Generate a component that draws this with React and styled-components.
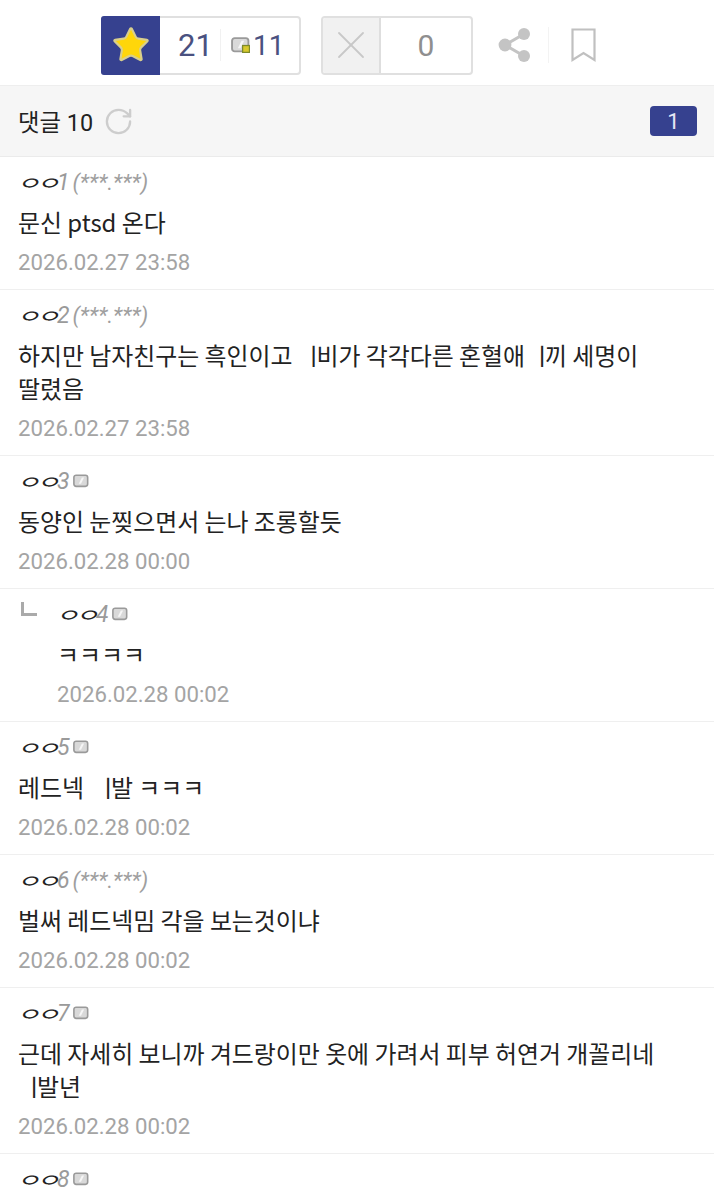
import React from 'react'
import styled, { createGlobalStyle } from 'styled-components'
import { Star, X, RotateCw } from 'lucide-react'

function Badge({ locked }) {
  return (
    <BadgeIcon viewBox="0 0 18 15" $locked={locked}>
      <rect x="1" y="1" width="15.5" height="12.5" rx="2.5" fill="#d9d9d9" stroke="#9a9a9a" strokeWidth="1.8" />
      <path d="M10 3.5 L12.5 3.5 L9 10.5 L6.5 10.5 Z" fill="#f6f6f6" />
      {locked && <rect x="11" y="8" width="6.5" height="6.5" fill="#d8c92c" stroke="#7d8a2a" strokeWidth="1.2" />}
    </BadgeIcon>
  )
}

function Comment({ item }) {
  return (
    <Row $reply={item.reply}>
      {item.reply && <ReplyMark />}
      <Writer>
        <Nick>ㅇㅇ</Nick>
        <Num>{item.id}</Num>
        {item.ip ? <Ip>(***.***)</Ip> : <Badge />}
      </Writer>
      {item.body.map((line, i) => (
        <Body key={i}>{line}</Body>
      ))}
      {item.date && <DateText>{item.date}</DateText>}
    </Row>
  )
}

export default function App() {
  const comments = [
    { id: 1, ip: true, body: ['문신 ptsd 온다'], date: '2026.02.27 23:58' },
    {
      id: 2,
      ip: true,
      body: [
        <>하지만 남자친구는 흑인이고<Gap $w={10} /><Sliver>ㅣ</Sliver>비가 각각다른 혼혈애<Gap $w={6} /><Sliver>ㅣ</Sliver>끼 세명이</>,
        '딸렸음',
      ],
      date: '2026.02.27 23:58',
    },
    { id: 3, body: ['동양인 눈찢으면서 는나 조롱할듯'], date: '2026.02.28 00:00' },
    { id: 4, reply: true, body: ['ㅋㅋㅋㅋ'], date: '2026.02.28 00:02' },
    { id: 5, body: [<>레드넥<Gap $w={13} /><Sliver>ㅣ</Sliver>발 ㅋㅋㅋ</>], date: '2026.02.28 00:02' },
    { id: 6, ip: true, body: ['벌써 레드넥밈 각을 보는것이냐'], date: '2026.02.28 00:02' },
    {
      id: 7,
      body: [
        '근데 자세히 보니까 겨드랑이만 옷에 가려서 피부 허연거 개꼴리네',
        <><Gap $w={5} /><Sliver>ㅣ</Sliver>발년</>,
      ],
      date: '2026.02.28 00:02',
    },
    { id: 8, body: [], date: '' },
  ]

  return (
    <>
      <Global />
      <Page>
        <Actions>
          <VoteBox>
            <UpIcon>
              <Star size={40} fill="#ffd60a" color="#d9cf8c" strokeWidth={1.3} />
            </UpIcon>
            <UpCount>21</UpCount>
            <Divider />
            <FixCount>
              <MiniBadge><Badge locked /></MiniBadge>
              11
            </FixCount>
          </VoteBox>
          <DownBox>
            <DownIcon>
              <X size={48} color="#c8c8c8" strokeWidth={0.9} />
            </DownIcon>
            <DownCount>0</DownCount>
          </DownBox>
          <ShareIcon viewBox="0 0 34 36">
            <path d="M26 7 L7 18 L26 29" fill="none" stroke="#c4c4c4" strokeWidth="3" />
            <circle cx="26" cy="7" r="6" fill="#c4c4c4" />
            <circle cx="7" cy="18" r="6.4" fill="#c4c4c4" />
            <circle cx="26" cy="29" r="6" fill="#c4c4c4" />
          </ShareIcon>
          <ActionLine />
          <BookmarkIcon viewBox="0 0 25 34">
            <path d="M1.5 1.5 H23.5 V32 L12.5 25 L1.5 32 Z" fill="none" stroke="#c0c0c0" strokeWidth="2.2" />
          </BookmarkIcon>
        </Actions>
        <Header>
          <HeaderTitle>
            댓글 10
            <RotateCw size={31} color="#cdcdcd" strokeWidth={1.8} />
          </HeaderTitle>
          <PageChip>1</PageChip>
        </Header>
        {comments.map((item) => (
          <Comment key={item.id} item={item} />
        ))}
      </Page>
    </>
  )
}

const Global = createGlobalStyle`
  html, body {
    margin: 0;
    padding: 0;
    background: #fff;
    overflow: hidden;
  }
  body {
    font-family: Roboto, "Noto Sans CJK KR", sans-serif;
  }
`

const Page = styled.div`
  width: 714px;
  height: 1197px;
  overflow: hidden;
`

const Actions = styled.div`
  height: 86px;
  display: flex;
  align-items: center;
  padding: 5px 0 0 101px;
  box-sizing: border-box;
  border-bottom: 1px solid #eee;
  svg {
    flex: none;
  }
`

const VoteBox = styled.div`
  width: 200px;
  height: 59px;
  box-sizing: border-box;
  display: flex;
  align-items: center;
  border: 2px solid #e0e0e0;
  border-radius: 4px;
`

const UpIcon = styled.div`
  width: 59px;
  height: 59px;
  margin: -2px 0 -2px -2px;
  background: #36418f;
  border-radius: 3px 0 0 3px;
  display: flex;
  align-items: center;
  justify-content: center;
`

const UpCount = styled.span`
  width: 60px;
  padding-left: 18px;
  box-sizing: border-box;
  font-size: 31px;
  color: #4a5180;
`

const Divider = styled.span`
  width: 1px;
  height: 32px;
  background: #f1f1f1;
`

const FixCount = styled.span`
  margin-left: 6px;
  display: flex;
  align-items: center;
  font-size: 28px;
  color: #4a5180;
`

const MiniBadge = styled.span`
  display: flex;
  margin-right: 3px;
`

const DownBox = styled.div`
  width: 152px;
  height: 59px;
  margin-left: 20px;
  box-sizing: border-box;
  display: flex;
  align-items: stretch;
  border: 2px solid #e0e0e0;
  border-radius: 4px;
  overflow: hidden;
`

const DownIcon = styled.div`
  width: 58px;
  background: #f1f1f1;
  border-right: 2px solid #dedede;
  box-sizing: border-box;
  display: flex;
  align-items: center;
  justify-content: center;
`

const DownCount = styled.span`
  flex: 1;
  display: flex;
  align-items: center;
  justify-content: center;
  font-size: 30px;
  color: #8f8f8f;
`

const ShareIcon = styled.svg`
  width: 34px;
  height: 36px;
  margin-left: 25px;
`

const ActionLine = styled.span`
  width: 1px;
  height: 36px;
  margin: 0 22px 0 16px;
  background: #f3f3f3;
`

const BookmarkIcon = styled.svg`
  width: 25px;
  height: 34px;
`

const Header = styled.div`
  height: 71px;
  box-sizing: border-box;
  background: #f6f6f6;
  border-bottom: 1px solid #ebebeb;
  padding: 0 17px 0 18px;
  display: flex;
  align-items: center;
  justify-content: space-between;
`

const HeaderTitle = styled.div`
  display: flex;
  align-items: center;
  gap: 10px;
  font-size: 23.4px;
  color: #222;
`

const PageChip = styled.span`
  width: 47px;
  height: 30px;
  background: #36418f;
  border-radius: 4px;
  color: #e6e8f5;
  font-size: 22px;
  display: flex;
  align-items: center;
  justify-content: center;
`

const Row = styled.div`
  position: relative;
  box-sizing: border-box;
  padding: 8px 0 12px ${(p) => (p.$reply ? '57px' : '18px')};
  border-bottom: 1px solid #efefef;
`

const ReplyMark = styled.span`
  position: absolute;
  left: 21px;
  top: 13px;
  width: 13px;
  height: 11px;
  border-left: 3px solid #aaa;
  border-bottom: 3px solid #aaa;
`

const Writer = styled.div`
  height: 34px;
  display: flex;
  align-items: center;
  padding-left: 2px;
  font-style: italic;
`

const Nick = styled.span`
  display: inline-block;
  width: 41px;
  margin-left: -4px;
  white-space: nowrap;
  font-family: "Noto Sans CJK KR", sans-serif;
  font-size: 23px;
  color: #222;
  letter-spacing: -4px;
  transform: scale(1.15, 0.8);
  transform-origin: left center;
`

const Num = styled.span`
  font-size: 23px;
  color: #9a9a9a;
`

const Ip = styled.span`
  margin-left: 3px;
  font-size: 22px;
  color: #9f9f9f;
`

const BadgeIcon = styled.svg`
  width: ${(p) => (p.$locked ? '19px' : '16px')};
  height: ${(p) => (p.$locked ? '16px' : '14px')};
  margin-left: ${(p) => (p.$locked ? '4px' : '3px')};
`

const Body = styled.div`
  margin-top: 6px;
  font-family: "Noto Sans CJK KR", sans-serif;
  font-size: 23.9px;
  line-height: 33px;
  color: #222;
  white-space: nowrap;
  & + & {
    margin-top: 0;
  }
`

const Gap = styled.span`
  display: inline-block;
  width: ${(p) => p.$w}px;
`

const Sliver = styled.span`
  letter-spacing: -8px;
`

const DateText = styled.div`
  margin-top: 9px;
  font-size: 22.2px;
  line-height: 30px;
  color: #a4a4a4;
`
